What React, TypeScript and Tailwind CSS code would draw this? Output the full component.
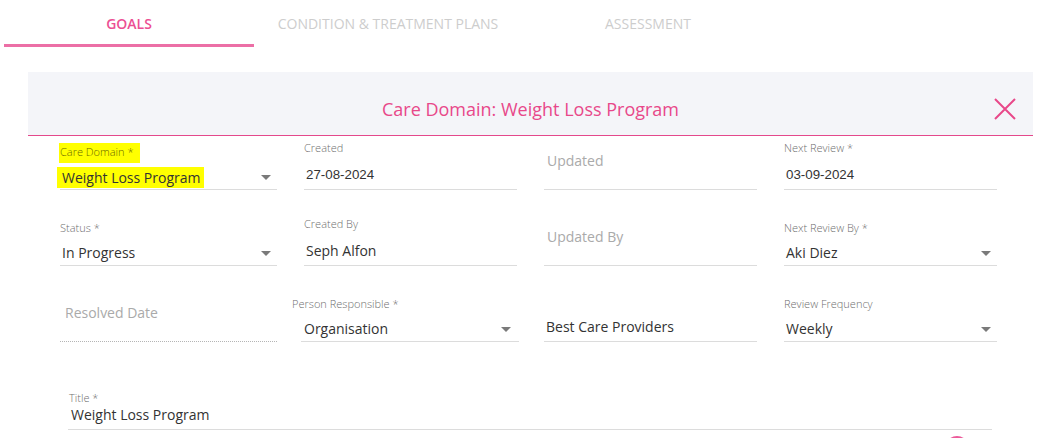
import React from "react";

const SANS = "font-['Open_Sans',sans-serif]";
const ARIAL = "font-['Liberation_Sans',Arial,sans-serif]";
const LABEL = "text-[11px] font-light leading-[16px] text-[#6f6f6f]";

function Caret() {
  return (
    <svg width="10" height="5" viewBox="0 0 10 5" className="shrink-0">
      <path d="M0 0 L10 0 L5 5 Z" fill="#7a7a7a" />
    </svg>
  );
}

function SelectField({
  label,
  value,
  highlight = false,
}: {
  label: string;
  value: string;
  highlight?: boolean;
}) {
  return (
    <div className="flex h-[50px] flex-col border-b border-[#dcdcdc]">
      <div className={`mt-[4px] h-[16px] ${LABEL}`}>
        {highlight ? (
          <span className="-ml-[1px] -mt-[1px] inline-block bg-[#ffff00] pb-[3px] pl-[1px] pr-[6px] pt-[1px] text-[#6b6b00]">
            {label}
          </span>
        ) : (
          label
        )}
      </div>
      <div className="mt-[5px] flex h-[24px] items-center justify-between pr-[6px]">
        {highlight ? (
          <span className="-ml-[3px] bg-[#ffff00] pl-[5px] pr-[4px] text-[14px] leading-[21px] text-[#333]">
            {value}
          </span>
        ) : (
          <span className="pl-[2px] text-[14px] leading-[24px] text-[#333]">{value}</span>
        )}
        <Caret />
      </div>
    </div>
  );
}

function InputField({
  label,
  value,
  date = false,
}: {
  label?: string;
  value: string;
  date?: boolean;
}) {
  return (
    <div className="flex h-[50px] flex-col border-b border-[#dcdcdc]">
      <div className={`h-[16px] ${LABEL}`}>{label}</div>
      <div
        className={`mt-[7px] h-[24px] pl-[2px] leading-[24px] text-[#333] ${
          date ? `${ARIAL} text-[13.33px]` : "text-[14px]"
        }`}
      >
        {value}
      </div>
    </div>
  );
}

function EmptyField({
  placeholder,
  dotted = false,
  indent = "pl-[3px]",
}: {
  placeholder: string;
  dotted?: boolean;
  indent?: string;
}) {
  return (
    <div
      className={`flex h-[50px] flex-col ${
        dotted ? "border-b border-dotted border-[#b5b5b5]" : "border-b border-[#dcdcdc]"
      }`}
    >
      <div className={`mt-[9px] text-[14px] leading-[24px] text-[#aaaaaa] ${indent}`}>
        {placeholder}
      </div>
    </div>
  );
}

export default function App() {
  return (
    <div className={`relative h-[438px] w-[1061px] overflow-hidden bg-white ${SANS}`}>
      {/* tabs */}
      <div className="ml-[4px] flex h-[47px] text-[14px]">
        <div className="flex w-[250px] flex-col">
          <div className="flex h-[44px] items-center justify-center pt-[2px] font-semibold text-[#ec4f93]">
            GOALS
          </div>
          <div className="h-[3px] bg-[#ec6fa6]" />
        </div>
        <div className="flex h-[44px] w-[268px] items-center justify-center pt-[2px] text-[#cdcdcd]">
          CONDITION &amp; TREATMENT PLANS
        </div>
        <div className="flex h-[44px] w-[252px] items-center justify-center pt-[2px] text-[#cdcdcd]">
          ASSESSMENT
        </div>
      </div>

      {/* panel */}
      <div className="ml-[28px] mt-[25px] w-[1005px]">
        <div className="relative flex h-[64px] items-center justify-center border-b border-[#e4498c] bg-[#f4f5f9]">
          <div className="pt-[12px] text-[18px] text-[#e8488a]">Care Domain: Weight Loss Program</div>
          <button type="button" className="absolute right-[16px] top-[25px]">
            <svg width="24" height="24" viewBox="0 0 24 24">
              <path d="M2 2 L22 22 M22 2 L2 22" stroke="#e8488a" strokeWidth="2" />
            </svg>
          </button>
        </div>

        <div className="grid grid-cols-[217px_213px_213px_213px] gap-x-[27px] gap-y-[26px] pl-[32px] pt-[4px]">
          <SelectField label="Care Domain *" value="Weight Loss Program" highlight />
          <InputField label="Created" value="27-08-2024" date />
          <EmptyField placeholder="Updated" />
          <InputField label="Next Review *" value="03-09-2024" date />

          <SelectField label="Status *" value="In Progress" />
          <InputField label="Created By" value="Seph Alfon" />
          <EmptyField placeholder="Updated By" />
          <SelectField label="Next Review By *" value="Aki Diez" />

          <EmptyField placeholder="Resolved Date" dotted indent="pl-[5px]" />
          <div className="-ml-[3px] w-[218px]">
            <div className="flex h-[50px] flex-col border-b border-[#dcdcdc]">
              <div className={`-ml-[9px] mt-[4px] h-[16px] ${LABEL}`}>Person Responsible *</div>
              <div className="mt-[5px] flex h-[24px] items-center justify-between pl-[3px] pr-[8px]">
                <span className="text-[14px] leading-[24px] text-[#333]">Organisation</span>
                <Caret />
              </div>
            </div>
          </div>
          <InputField value="Best Care Providers" />
          <SelectField label="Review Frequency" value="Weekly" />
        </div>

        <div className="ml-[40px] mt-[49px] flex h-[39px] w-[924px] flex-col border-b border-[#dcdcdc]">
          <div className="pl-[1px] text-[11px] font-light leading-[14px] text-[#6f6f6f]">Title *</div>
          <div className="pl-[3px] text-[14px] leading-[20px] text-[#333]">Weight Loss Program</div>
        </div>
      </div>

      <div className="absolute left-[945px] top-[436px] h-[24px] w-[24px] rounded-full bg-[#ec5a9a]" />
    </div>
  );
}
